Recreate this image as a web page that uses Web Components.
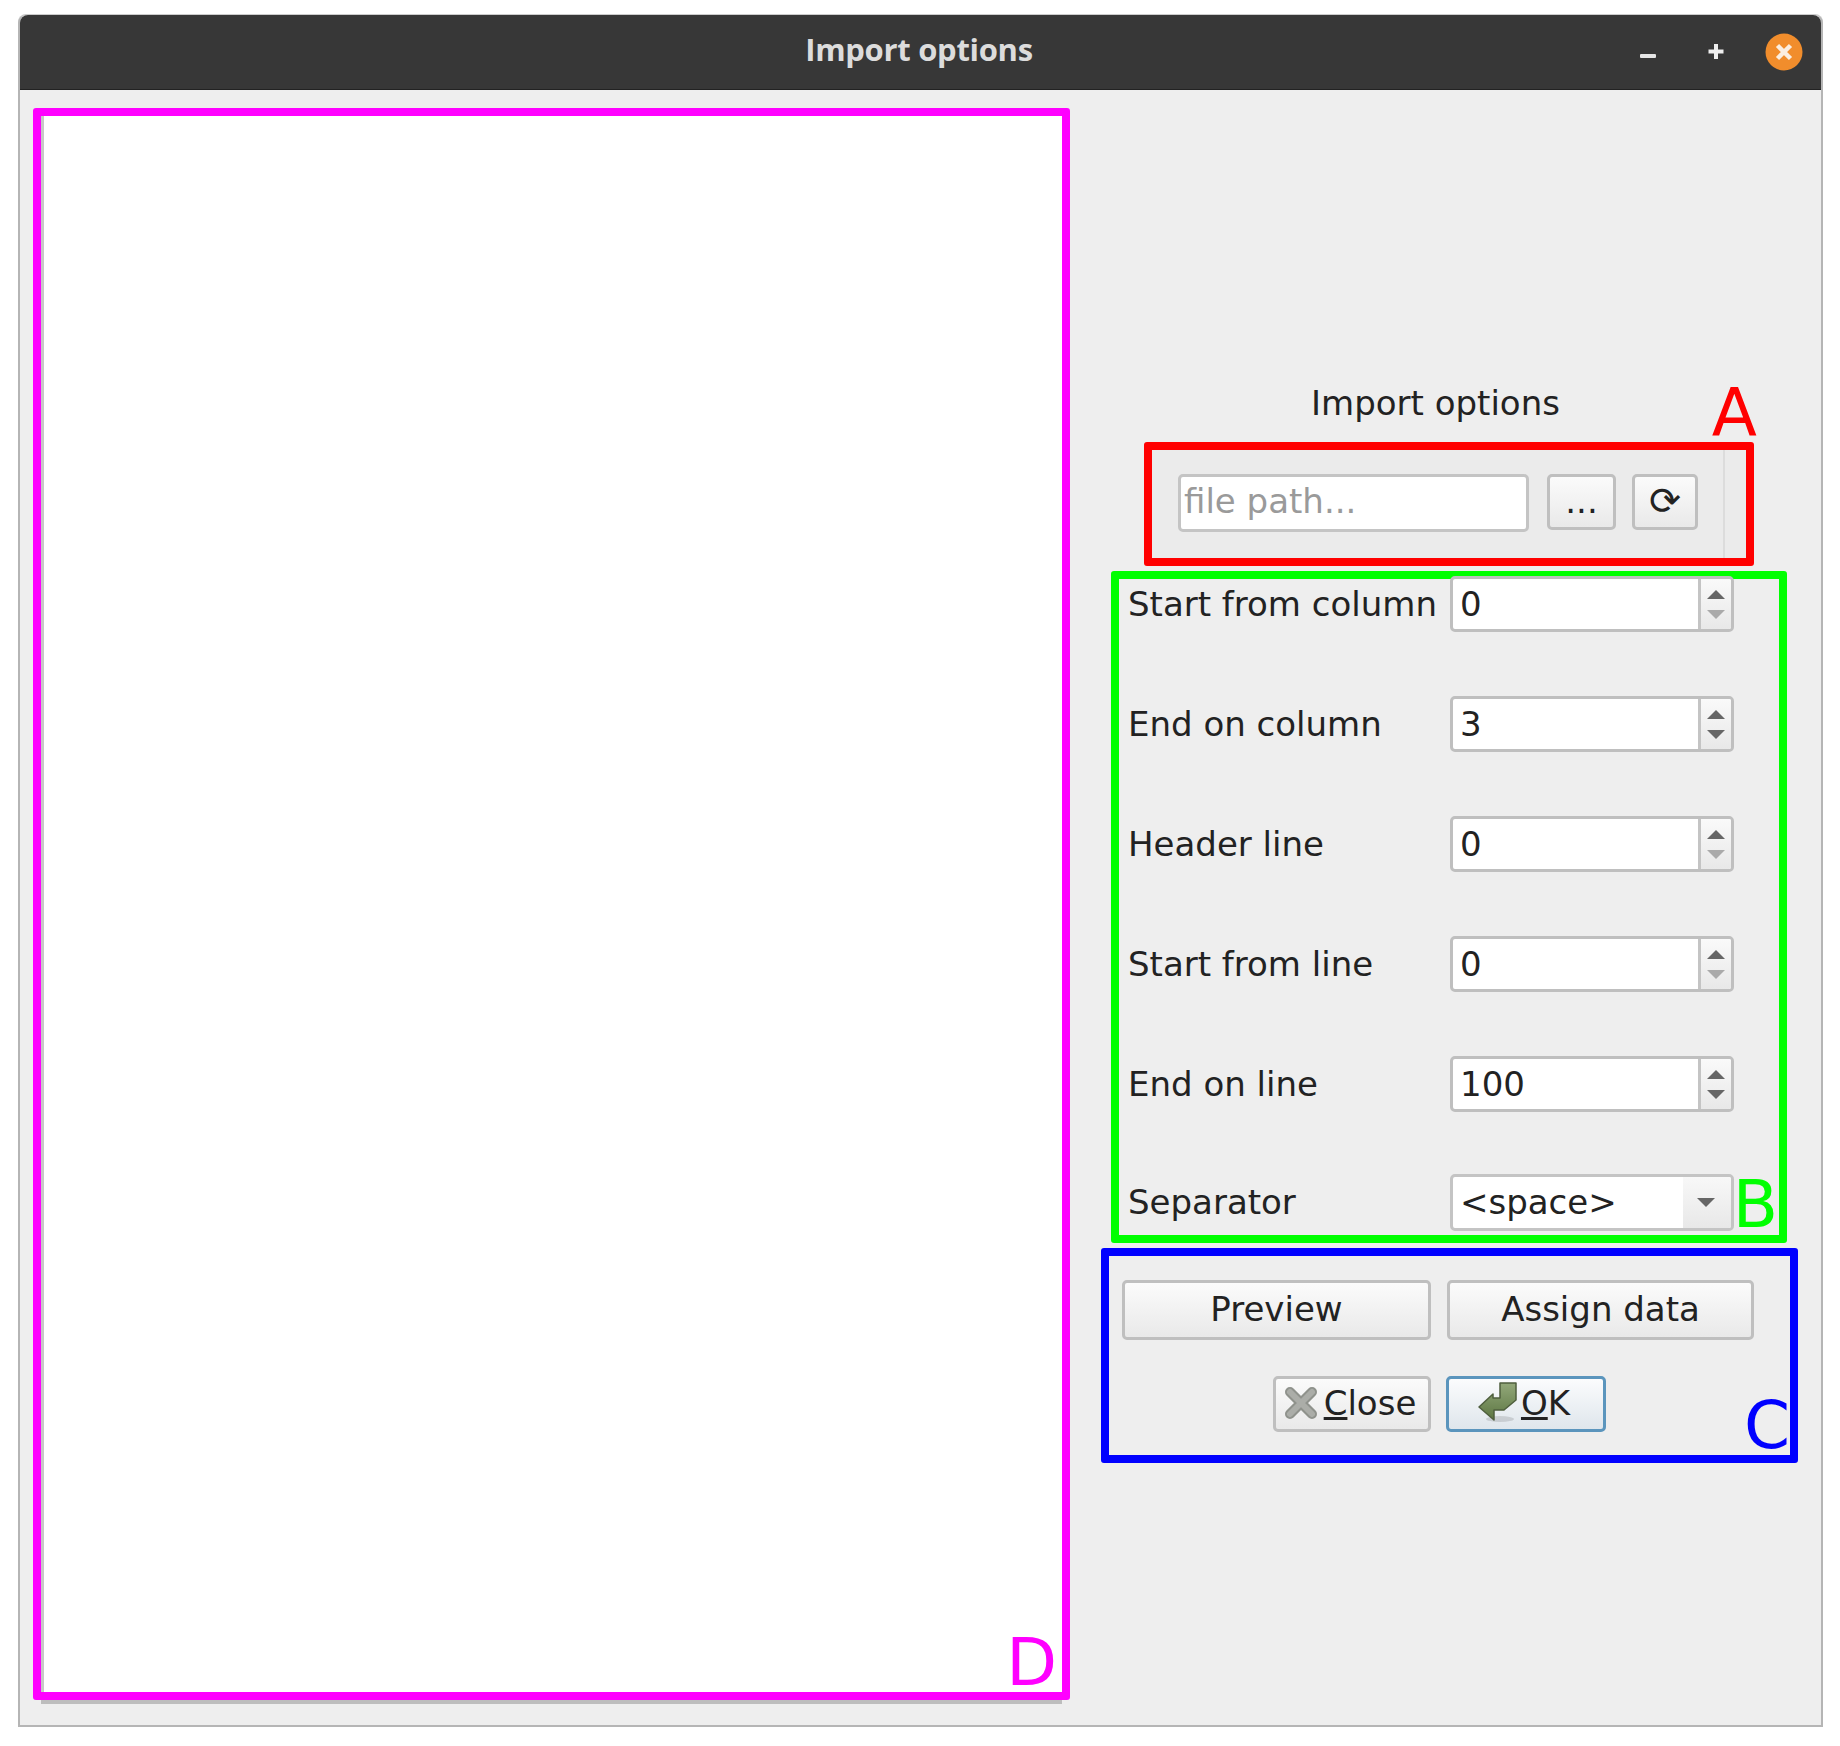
<!DOCTYPE html>
<html>
<head>
<meta charset="utf-8">
<title>Import options</title>
<style>
  html, body { margin: 0; padding: 0; background: #fff; }
  body { font-family: "DejaVu Sans", sans-serif; color: #2e3436; }
</style>
</head>
<body>
<script>
// small shared bit: qt fusion style button look
const BTN_CSS = `
  background: linear-gradient(#fbfbfb, #e9e9e9);
  border: 3px solid #bfbfbf;
  border-radius: 5px;
  box-sizing: border-box;
`;

class TitleBar extends HTMLElement {
  constructor() {
    super();
    this.attachShadow({ mode: 'open' });
    this.shadowRoot.innerHTML = `
      <style>
        :host { display: flex; align-items: center; justify-content: center; position: relative; height: 75px; box-sizing: border-box; padding-bottom: 6px;
          background: #373737; border-bottom: 1px solid #222; border-radius: 8px 8px 0 0; }
        .t { font: 700 31px "Open Sans", sans-serif; color: #dcdcdc; letter-spacing: -0.3px; margin-left: -3px; }
        .ctl { position: absolute; right: 18px; top: 18px; display: flex; align-items: center; gap: 30px; }
        svg { display: block; }
      </style>
      <span class="t"><slot></slot></span>
      <div class="ctl">
        <svg width="38" height="38" viewBox="0 0 38 38"><rect x="11" y="21" width="16" height="4" rx="1" fill="#e6e6e6"/></svg>
        <svg width="38" height="38" viewBox="0 0 38 38"><path d="M19 11v15M11.500 18.500h15" stroke="#eee" stroke-width="4" fill="none"/></svg>
        <svg width="38" height="38" viewBox="0 0 38 38"><circle cx="19" cy="19" r="18.500" fill="#f18d2c"/><path d="M12.500 12.500l13 13M25.500 12.500l-13 13" stroke="#fbeee0" stroke-width="4.500" fill="none"/></svg>
      </div>
    `;
  }
}
customElements.define('title-bar', TitleBar);

// coloured annotation frame with its letter
class AnnoBox extends HTMLElement {
  constructor() {
    super();
    this.attachShadow({ mode: 'open' });
    this.shadowRoot.innerHTML = `
      <style>
        :host { display: block; position: relative; box-sizing: border-box; border: 8px solid var(--c); border-radius: 3px; }
        .l { position: absolute; color: var(--c); font: 66px/1 "DejaVu Sans", sans-serif; }
      </style>
      <slot></slot>
      <span class="l"></span>
    `;
  }
  connectedCallback() {
    this.style.setProperty('--c', this.getAttribute('color'));
    const l = this.shadowRoot.querySelector('.l');
    l.textContent = this.getAttribute('letter');
    l.style.cssText = this.getAttribute('place');
  }
}
customElements.define('anno-box', AnnoBox);

class PushBtn extends HTMLElement {
  constructor() {
    super();
    this.attachShadow({ mode: 'open' });
    this.shadowRoot.innerHTML = `
      <style>
        :host { display: flex; align-items: center; justify-content: center; padding-bottom: 2px; ${BTN_CSS} font-size: 34px; color: #222; }
        :host([default]) { border-color: #5b95bd; background: linear-gradient(#fbfcfd, #dfe6ec); }
      </style>
      <slot name="icon"></slot><span><slot></slot></span>
    `;
  }
}
customElements.define('push-btn', PushBtn);

class SpinBox extends HTMLElement {
  constructor() {
    super();
    this.attachShadow({ mode: 'open' });
    this.shadowRoot.innerHTML = `
      <style>
        :host { display: flex; box-sizing: border-box; width: 284px; height: 56px; border: 3px solid #bfbfbf; border-radius: 5px; background: #fff; overflow: hidden; }
        .v { flex: 1; padding-left: 7px; font-size: 34px; line-height: 50px; color: #222; }
        .b { width: 33px; box-sizing: border-box; border-left: 3px solid #c4c4c4; background: linear-gradient(#fafafa, #e8e8e8); display: flex; flex-direction: column; align-items: center; justify-content: center; gap: 11px; }
        i { display: block; width: 0; height: 0; border-left: 9px solid transparent; border-right: 9px solid transparent; }
        .up { border-bottom: 9px solid #666; }
        .dn { border-top: 9px solid #666; }
        :host([min]) .dn { border-top-color: #aaa; }
      </style>
      <div class="v"><slot></slot></div>
      <div class="b"><i class="up"></i><i class="dn"></i></div>
    `;
  }
}
customElements.define('spin-box', SpinBox);

class ComboBox extends HTMLElement {
  constructor() {
    super();
    this.attachShadow({ mode: 'open' });
    this.shadowRoot.innerHTML = `
      <style>
        :host { display: flex; box-sizing: border-box; width: 284px; height: 57px; margin-top: -4px; border: 3px solid #c4c4c4; border-radius: 5px; background: #fff; overflow: hidden; }
        .v { flex: 1; padding-left: 7px; font-size: 34px; line-height: 50px; color: #222; }
        .b { width: 48px; padding-right: 3px; box-sizing: border-box; background: linear-gradient(#f8f8f8, #e8e8e8); display: flex; align-items: center; justify-content: center; }
        i { display: block; width: 0; height: 0; border-left: 9px solid transparent; border-right: 9px solid transparent; border-top: 9px solid #666; }
      </style>
      <div class="v"><slot></slot></div>
      <div class="b"><i></i></div>
    `;
  }
}
customElements.define('combo-box', ComboBox);

class FormRow extends HTMLElement {
  constructor() {
    super();
    this.attachShadow({ mode: 'open' });
    this.shadowRoot.innerHTML = `
      <style>
        :host { display: flex; align-items: center; height: 56px; font-size: 34px; color: #222; }
        .n { width: 331px; padding-left: 9px; box-sizing: border-box; white-space: nowrap; }
        :host([raised]) .n { margin-top: -4px; }
      </style>
      <span class="n"></span><slot></slot>
    `;
  }
  connectedCallback() {
    this.shadowRoot.querySelector('.n').textContent = this.getAttribute('label');
  }
}
customElements.define('form-row', FormRow);

class ImportDialog extends HTMLElement {
  constructor() {
    super();
    this.attachShadow({ mode: 'open' });
    this.shadowRoot.innerHTML = `
      <style>
        :host { display: flex; flex-direction: column; box-sizing: border-box; width: 1805px; height: 1712px; margin: 15px 0 0 18px;
          background: #eee; border: 2px solid #b5b5b5; border-top: 0; border-radius: 8px 8px 0 0; box-shadow: 0 -1px 0 #ccc; }
        .body { flex: 1; display: flex; padding: 18px 0 0 13px; min-height: 0; }
        .canvas { width: 1037px; height: 1592px; box-sizing: border-box; background: #fff; box-shadow: inset 3px 0 0 #c8c8c8, 0 12px 0 -8px #bdbdbd; }
        .side { margin-left: 31px; width: 697px; display: flex; flex-direction: column; align-items: flex-start; }
        .cap { width: 669px; text-align: center; font-size: 34px; color: #222; margin-top: 272px; height: 62px; line-height: 47px; }
        .a { margin-left: 43px; width: 610px; height: 124px; background: #ebebeb; }
        .a-in { display: flex; align-items: flex-start; padding: 24px 0 0 26px; height: 100%; box-sizing: border-box; border-right: 2px solid #dcdcdc; width: 573px; }
        .path { width: 351px; height: 58px; box-sizing: border-box; border: 3px solid #c4c4c4; border-radius: 5px; background: #fff; color: #9a9a9a; font-size: 34px; line-height: 48px; padding-left: 3px; }
        .tool { height: 56px; }
        .b { margin: 5px 0 0 10px; width: 676px; height: 672px; }
        .rows { display: flex; flex-direction: column; gap: 64px; margin-top: -3px; }
        .c { margin-top: 5px; width: 697px; height: 215px; }
        .c-row { display: flex; padding-left: 13px; gap: 16px; }
        .wide { height: 60px; width: 309px; }
        .small { height: 56px; width: 158px; }
        .c-row.top { margin-top: 24px; }
        .c-row.bot { margin-top: 36px; padding-left: 164px; gap: 15px; }
        svg { display: block; }
      </style>
      <title-bar><slot name="title"></slot></title-bar>
      <div class="body">
        <anno-box class="canvas" color="#ff00ff" letter="D" place="right:5px;bottom:-4px;"></anno-box>
        <div class="side">
          <div class="cap">Import options</div>
          <anno-box class="a" color="#ff0000" letter="A" place="right:-11px;top:-70px;">
            <div class="a-in">
              <div class="path">file path...</div>
              <push-btn class="tool" style="width:69px;margin-left:18px;">...</push-btn>
              <push-btn class="tool" style="width:66px;margin-left:16px;font-size:38px;">⟳</push-btn>
            </div>
          </anno-box>
          <anno-box class="b" color="#00ff00" letter="B" place="right:1px;bottom:-3px;">
            <div class="rows">
              <form-row label="Start from column"><spin-box min>0</spin-box></form-row>
              <form-row label="End on column"><spin-box>3</spin-box></form-row>
              <form-row label="Header line"><spin-box min>0</spin-box></form-row>
              <form-row label="Start from line"><spin-box min>0</spin-box></form-row>
              <form-row label="End on line"><spin-box>100</spin-box></form-row>
              <form-row label="Separator" raised><combo-box>&lt;space&gt;</combo-box></form-row>
            </div>
          </anno-box>
          <anno-box class="c" color="#0000ff" letter="C" place="right:0;bottom:-4px;">
            <div class="c-row top">
              <push-btn class="wide">Preview</push-btn>
              <push-btn class="wide" style="width:307px;">Assign data</push-btn>
            </div>
            <div class="c-row bot">
              <push-btn class="small" style="padding-right:4px;">
                <svg slot="icon" width="34" height="34" viewBox="0 0 34 34" style="margin-right:6px;">
                  <path d="M6 6L28 28M28 6L6 28" stroke="#8f928c" stroke-width="10" stroke-linecap="round" fill="none"/>
                  <path d="M6 6L28 28M28 6L6 28" stroke="#abada8" stroke-width="6" stroke-linecap="round" fill="none"/>
                </svg>
                <u>C</u>lose
              </push-btn>
              <push-btn class="small" default style="width:160px;padding-right:4px;">
                <svg slot="icon" width="40" height="42" viewBox="0 0 40 42" style="margin-right:3px;">
                  <defs><linearGradient id="g" x1="0" y1="0" x2="0" y2="1"><stop offset="0" stop-color="#93a87a"/><stop offset="1" stop-color="#5c7642"/></linearGradient></defs>
                  <ellipse cx="22" cy="37" rx="14" ry="3" fill="#000" opacity=".12"/>
                  <path d="M22 1H38V18L26 28H16V38L1 25L15 12V16H22Z" fill="url(#g)" stroke="#4f5f3e" stroke-width="1.500" stroke-linejoin="round"/>
                </svg>
                <span><u>O</u>K</span>
              </push-btn>
            </div>
          </anno-box>
        </div>
      </div>
    `;
  }
}
customElements.define('import-dialog', ImportDialog);
</script>
<import-dialog><span slot="title">Import options</span></import-dialog>
</body>
</html>
